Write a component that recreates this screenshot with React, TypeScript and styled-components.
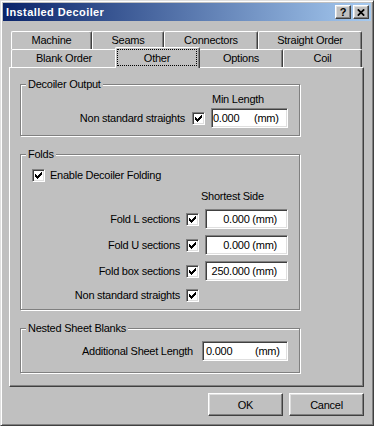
import React from "react";
import styled, { createGlobalStyle } from "styled-components";

const FACE = "#c0c0c0";

const GlobalStyle = createGlobalStyle`
  html, body {
    margin: 0;
    padding: 0;
    background: ${FACE};
  }
  body {
    font-family: "Liberation Sans", Arial, sans-serif;
    font-size: 11px;
    letter-spacing: -0.25px;
    color: #000;
  }
`;

type TabDef = { label: string; width: number; active?: boolean };

const ROW1: TabDef[] = [
    { label: "Machine", width: 81 },
    { label: "Seams", width: 72 },
    { label: "Connectors", width: 94 },
    { label: "Straight Order", width: 104 },
];

const ROW2: TabDef[] = [
    { label: "Blank Order", width: 106 },
    { label: "Other", width: 82, active: true },
    { label: "Options", width: 84 },
    { label: "Coil", width: 79 },
];

// classic 7x7 tick, one 3px column per x
const TICK = [2, 3, 4, 3, 2, 1, 0];

const Check: React.FC = () => (
    <CheckBox>
        <svg width="11" height="11" viewBox="0 0 11 11" shapeRendering="crispEdges">
            {TICK.map((y, i) => (
                <rect key={i} x={2 + i} y={2 + y} width="1" height="3" fill="#000" />
            ))}
        </svg>
    </CheckBox>
);

const TabRowView: React.FC<{ tabs: TabDef[] }> = ({ tabs }) => (
    <TabRow>
        {tabs.map((t) => (
            <Tab key={t.label} $w={t.width} $active={t.active}>
                {t.active ? <FocusBox>{t.label}</FocusBox> : t.label}
            </Tab>
        ))}
    </TabRow>
);

export default function App() {
    return (
        <>
            <GlobalStyle />
            <Window>
                <TitleBar>
                    <Title>Installed Decoiler</Title>
                    <CaptionButton>?</CaptionButton>
                    <CaptionButton>
                        <svg width="8" height="7" viewBox="0 0 8 7">
                            <path d="M0.8 0.3L7.2 6.7M7.2 0.3L0.8 6.7" stroke="#000" strokeWidth="1.7" />
                        </svg>
                    </CaptionButton>
                </TitleBar>

                <Body>
                    <TabStrip>
                        <TabRowView tabs={ROW1} />
                        <TabRowView tabs={ROW2} />
                    </TabStrip>

                    <Panel>
                        <Group $pad="2px 0 7px 0">
                            <Legend>Decoiler Output</Legend>
                            <FieldGrid $cols="171px 19px 77px" $rows="13px 20px" $gap={2}>
                                <Heading $col="3" $pl={1}>Min Length</Heading>
                                <FieldLabel $pr={7}>Non standard straights</FieldLabel>
                                <Check />
                                <EditBox $pl={1}>
                                    <Value $w={41}>0.000</Value>
                                    <span>(mm)</span>
                                </EditBox>
                            </FieldGrid>
                        </Group>

                        <Group $pad="8px 0 6px 0">
                            <Legend>Folds</Legend>
                            <FieldGrid $cols="165px 19px 83px" $rows="13px 15px 20px 20px 20px 16px" $gap={6}>
                                <OptionLine>
                                    <Check />
                                    <span>Enable Decoiler Folding</span>
                                </OptionLine>
                                <Heading $col="2 / 4" $pl={15} $end>Shortest Side</Heading>

                                <FieldLabel $pr={6}>Fold L sections</FieldLabel>
                                <Check />
                                <EditBox $right>0.000 (mm)</EditBox>

                                <FieldLabel $pr={6}>Fold U sections</FieldLabel>
                                <Check />
                                <EditBox $right>0.000 (mm)</EditBox>

                                <FieldLabel $pr={6}>Fold box sections</FieldLabel>
                                <Check />
                                <EditBox $right>250.000 (mm)</EditBox>

                                <FieldLabel $pr={6}>Non standard straights</FieldLabel>
                                <Check />
                            </FieldGrid>
                        </Group>

                        <Group $pad="6px 0 11px 0">
                            <Legend>Nested Sheet Blanks</Legend>
                            <FieldGrid $cols="181px 86px" $rows="20px" $gap={0}>
                                <FieldLabel $pr={9}>Additional Sheet Length</FieldLabel>
                                <EditBox $pl={3}>
                                    <Value $w={49}>0.000</Value>
                                    <span>(mm)</span>
                                </EditBox>
                            </FieldGrid>
                        </Group>
                    </Panel>

                    <ButtonRow>
                        <PushButton type="button">OK</PushButton>
                        <PushButton type="button">Cancel</PushButton>
                    </ButtonRow>
                </Body>
            </Window>
        </>
    );
}

const Window = styled.div`
    box-sizing: border-box;
    width: 374px;
    height: 426px;
    display: flex;
    flex-direction: column;
    background: ${FACE};
    border: 1px solid;
    border-color: #dfdfdf #404040 #404040 #dfdfdf;
    box-shadow: inset 1px 1px #fff, inset -1px -1px #808080;
    padding: 2px;
`;

const TitleBar = styled.div`
    flex: none;
    height: 18px;
    display: flex;
    align-items: center;
    padding: 0 2px 0 3px;
    background: linear-gradient(to right, #0a246a, #a6caf0);
    color: #fff;
    font-weight: bold;
    letter-spacing: 0.4px;
`;

const Title = styled.span`
    flex: 1;
`;

const CaptionButton = styled.div`
    box-sizing: border-box;
    width: 16px;
    height: 14px;
    display: flex;
    align-items: center;
    justify-content: center;
    background: ${FACE};
    border: 1px solid;
    border-color: #fff #404040 #404040 #fff;
    box-shadow: inset -1px -1px #808080, inset 1px 1px #dfdfdf;
    color: #000;
    letter-spacing: 0;

    & + & {
        margin-left: 2px;
    }

    svg {
        display: block;
    }
`;

const Body = styled.div`
    flex: 1;
    display: flex;
    flex-direction: column;
    padding: 10px 7px 0 6px;
`;

const TabStrip = styled.div`
    display: flex;
    flex-direction: column;
    padding: 0 2px;
`;

const TabRow = styled.div`
    display: flex;
    align-items: flex-start;
    height: 18px;
`;

const Tab = styled.div<{ $w: number; $active?: boolean }>`
    box-sizing: border-box;
    flex: none;
    position: relative;
    z-index: ${(p) => (p.$active ? 2 : 0)};
    display: flex;
    align-items: ${(p) => (p.$active ? "stretch" : "center")};
    justify-content: center;
    width: ${(p) => (p.$active ? p.$w + 3 : p.$w)}px;
    height: ${(p) => (p.$active ? 21 : 18)}px;
    margin: ${(p) => (p.$active ? "-2px -1px 0 -2px" : "0")};
    padding-bottom: ${(p) => (p.$active ? 0 : 1)}px;
    background: ${FACE};
    border-top: 1px solid #fff;
    border-left: 1px solid #fff;
    border-right: 1px solid #404040;
    border-radius: 2px 2px 0 0;
    box-shadow: inset -1px 0 #808080;
    white-space: nowrap;
`;

const FocusBox = styled.span`
    flex: 1;
    display: flex;
    align-items: center;
    justify-content: center;
    margin: 1px 2px 2px 1px;
    border: 1px dotted #000;
`;

const Panel = styled.div`
    box-sizing: border-box;
    height: 320px;
    display: flex;
    flex-direction: column;
    gap: 12px;
    padding: 10px 0 0 10px;
    border: 1px solid;
    border-color: #fff #404040 #404040 #fff;
    box-shadow: inset -1px -1px #808080;
`;

const Group = styled.fieldset<{ $pad: string }>`
    box-sizing: border-box;
    width: 280px;
    min-width: 0;
    margin: 0;
    padding: ${(p) => p.$pad};
    border: 1px solid #808080;
    box-shadow: inset 1px 1px #fff, 1px 1px #fff;
`;

const Legend = styled.legend`
    margin-left: 5px;
    padding: 0 2px;
    line-height: 13px;
    background: ${FACE};
`;

const FieldGrid = styled.div<{ $cols: string; $rows: string; $gap: number }>`
    display: grid;
    grid-template-columns: ${(p) => p.$cols};
    grid-template-rows: ${(p) => p.$rows};
    row-gap: ${(p) => p.$gap}px;
    align-items: center;
    line-height: 13px;
`;

const FieldLabel = styled.span<{ $pr: number }>`
    grid-column: 1;
    text-align: right;
    padding-right: ${(p) => p.$pr}px;
    white-space: nowrap;
`;

const Heading = styled.span<{ $col: string; $pl: number; $end?: boolean }>`
    grid-column: ${(p) => p.$col};
    align-self: ${(p) => (p.$end ? "end" : "center")};
    padding-left: ${(p) => p.$pl}px;
    white-space: nowrap;
`;

const OptionLine = styled.div`
    grid-column: 1 / -1;
    display: flex;
    align-items: center;
    gap: 5px;
    margin-left: 11px;
`;

const CheckBox = styled.span`
    box-sizing: border-box;
    justify-self: start;
    width: 13px;
    height: 13px;
    display: inline-flex;
    background: #fff;
    border: 1px solid;
    border-color: #808080 #fff #fff #808080;
    box-shadow: inset 1px 1px #404040, inset -1px -1px #dfdfdf;

    svg {
        display: block;
    }
`;

const EditBox = styled.div<{ $right?: boolean; $pl?: number }>`
    box-sizing: border-box;
    height: 20px;
    display: flex;
    align-items: center;
    justify-content: ${(p) => (p.$right ? "flex-end" : "flex-start")};
    padding: 0 ${(p) => (p.$right ? 10 : 0)}px 0 ${(p) => p.$pl ?? 0}px;
    background: #fff;
    border: 1px solid;
    border-color: #808080 #fff #fff #808080;
    box-shadow: inset 1px 1px #404040, inset -1px -1px #dfdfdf;
    white-space: nowrap;
`;

const Value = styled.span<{ $w: number }>`
    width: ${(p) => p.$w}px;
`;

const ButtonRow = styled.div`
    display: flex;
    justify-content: flex-end;
    gap: 6px;
    margin-top: 6px;
`;

const PushButton = styled.button`
    box-sizing: border-box;
    width: 75px;
    height: 23px;
    padding: 0;
    background: ${FACE};
    border: 1px solid;
    border-color: #fff #404040 #404040 #fff;
    box-shadow: inset -1px -1px #808080, inset 1px 1px #dfdfdf;
    border-radius: 0;
    font-family: inherit;
    font-size: 11px;
    letter-spacing: -0.25px;
    color: #000;
`;
